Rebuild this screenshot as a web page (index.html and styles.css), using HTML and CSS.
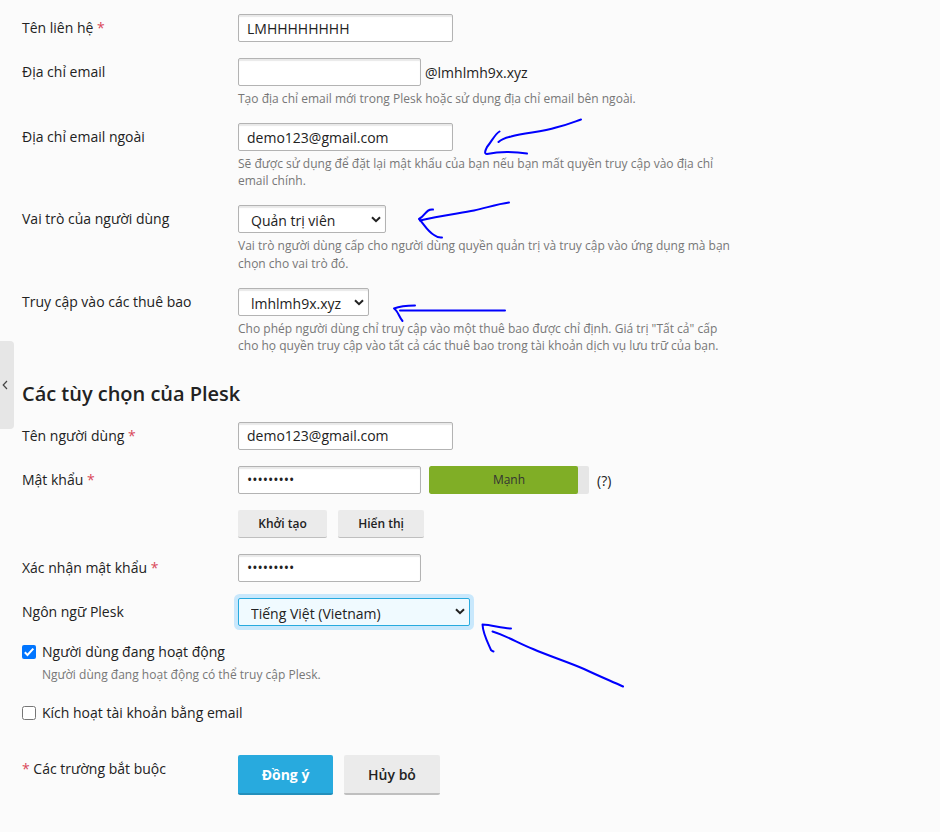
FILE: index.html
```html
<!DOCTYPE html>
<html lang="vi">
<head>
<meta charset="utf-8">
<title>Plesk</title>
<link rel="stylesheet" href="styles.css">
</head>
<body>
<button class="collapse" type="button" aria-label="Thu gọn"><svg width="6" height="10" viewBox="0 0 6 10"><path d="M5 1 1.2 5 5 9"/></svg></button>
<form class="form">
  <div class="row">
    <label class="label">Tên liên hệ <span class="req">*</span></label>
    <div class="field"><input class="input" type="text" value="LMHHHHHHHH"></div>
  </div>
  <div class="row">
    <label class="label">Địa chỉ email</label>
    <div class="field">
      <div class="line"><input class="input input-short" type="text"><span class="domain">@lmhlmh9x.xyz</span></div>
      <p class="hint">Tạo địa chỉ email mới trong Plesk hoặc sử dụng địa chỉ email bên ngoài.</p>
    </div>
  </div>
  <div class="row">
    <label class="label">Địa chỉ email ngoài</label>
    <div class="field">
      <input class="input" type="text" value="demo123@gmail.com">
      <p class="hint">Sẽ được sử dụng để đặt lại mật khẩu của bạn nếu bạn mất quyền truy cập vào địa chỉ<br>email chính.</p>
    </div>
  </div>
  <div class="row row-role">
    <label class="label">Vai trò của người dùng</label>
    <div class="field">
      <div class="select select-role"><select><option>Quản trị viên</option></select><svg class="chevron" width="10" height="7" viewBox="0 0 10 7"><path d="M1 1.2 5 5.2 9 1.2"/></svg></div>
      <p class="hint">Vai trò người dùng cấp cho người dùng quyền quản trị và truy cập vào ứng dụng mà bạn<br>chọn cho vai trò đó.</p>
    </div>
  </div>
  <div class="row">
    <label class="label">Truy cập vào các thuê bao</label>
    <div class="field">
      <div class="select select-sub"><select><option>lmhlmh9x.xyz</option></select><svg class="chevron" width="10" height="7" viewBox="0 0 10 7"><path d="M1 1.2 5 5.2 9 1.2"/></svg></div>
      <p class="hint">Cho phép người dùng chỉ truy cập vào một thuê bao được chỉ định. Giá trị "Tất cả" cấp<br>cho họ quyền truy cập vào tất cả các thuê bao trong tài khoản dịch vụ lưu trữ của bạn.</p>
    </div>
  </div>
  <h2 class="title">Các tùy chọn của Plesk</h2>
  <div class="row">
    <label class="label">Tên người dùng <span class="req">*</span></label>
    <div class="field"><input class="input" type="text" value="demo123@gmail.com"></div>
  </div>
  <div class="row">
    <label class="label">Mật khẩu <span class="req">*</span></label>
    <div class="field">
      <div class="line">
        <input class="input input-short" type="password" value="demo12345">
        <div class="meter"><div class="meter-fill">Mạnh</div></div>
        <span class="help">(?)</span>
      </div>
      <div class="line tools">
        <button class="btn btn-generate" type="button">Khởi tạo</button>
        <button class="btn btn-show" type="button">Hiển thị</button>
      </div>
    </div>
  </div>
  <div class="row">
    <label class="label">Xác nhận mật khẩu <span class="req">*</span></label>
    <div class="field"><input class="input input-short" type="password" value="demo12345"></div>
  </div>
  <div class="row">
    <label class="label">Ngôn ngữ Plesk</label>
    <div class="field">
      <div class="select select-lang focused"><select><option>Tiếng Việt (Vietnam)</option></select><svg class="chevron" width="10" height="7" viewBox="0 0 10 7"><path d="M1 1.2 5 5.2 9 1.2"/></svg></div>
    </div>
  </div>
  <div class="check">
    <svg class="box" width="14" height="14" viewBox="0 0 14 14"><rect width="14" height="14" rx="2" fill="#0075ff"/><path d="M2.8 7.3 5.5 10 11.3 3.6" fill="none" stroke="#fff" stroke-width="2"/></svg>
    <div><label>Người dùng đang hoạt động</label><p class="hint">Người dùng đang hoạt động có thể truy cập Plesk.</p></div>
  </div>
  <div class="check">
    <svg class="box" width="14" height="14" viewBox="0 0 14 14"><rect x=".5" y=".5" width="13" height="13" rx="2" fill="#fff" stroke="#767676"/></svg>
    <label>Kích hoạt tài khoản bằng email</label>
  </div>
  <div class="footer">
    <div class="note"><span class="req">*</span> Các trường bắt buộc</div>
    <button class="btn btn-large btn-primary" type="button">Đồng ý</button>
    <button class="btn btn-large btn-cancel" type="button">Hủy bỏ</button>
  </div>
</form>
<svg class="ink" width="940" height="832" viewBox="0 0 940 832">
  <path d="M581 119.500C576 121 570 124 556 127.500C542 132 526 132.500 511 136.500Q502 138.500 498.500 142"/>
  <path d="M499.500 131.500C495 134 492 141 487 147C485 151 484 154 487 154C494 152.500 499 152 507 152Q518 152 527 153.500"/>
  <path d="M509 202.500C497 204 486 208 474 210.500C458 213.500 438 216 420 220.500"/>
  <path d="M433 209.500C426 208.500 425 216 419 219C424 224 427 231 434 235Q438 238 442 237.500"/>
  <path d="M505 310.500H400"/>
  <path d="M415 305.500C405 305.500 399 306.500 394 308.500C398 311 399 317 402.500 321"/>
  <path d="M623 686.500C611 681 601 677 584 669C568 662 549 656 533 649C518 643 507 636 492.500 631.500"/>
  <path d="M511 628.500C501 628 492 625 482.500 624.500C483 634 488 643 491 650Q492 651 493.500 651.500"/>
</svg>
</body>
</html>
```
FILE: styles.css
```css
* { box-sizing: border-box; }
body {
  margin: 0;
  width: 940px;
  height: 832px;
  overflow: hidden;
  position: relative;
  background: #fbfbfb;
  color: #222;
  font: 14px/20px "Open Sans", "Noto Sans", sans-serif;
}
.form { padding: 14px 0 0 22px; }
.row { display: grid; grid-template-columns: 216px 1fr; margin-bottom: 16px; }
.row-role { margin-top: -0.1px; }
.row-role .hint { margin-top: 3.6px; }
.label { padding-top: 4px; }
.req { color: #d9485a; }
.field { display: flex; flex-direction: column; align-items: flex-start; }
.line { display: flex; }
.input {
  width: 215px;
  height: 28px;
  padding: 0 8px;
  border: 1px solid #b3b3b3;
  border-radius: 2px;
  background: #fff;
  box-shadow: inset 0 2px 1px #e9e9e9;
  color: #222;
  font: inherit;
  outline: 0;
}
.input-short { width: 183px; }
.domain { margin: 5px 0 0 4px; }
.hint { margin: 3.5px 0 0; color: #777; font-size: 12px; line-height: 17.5px; letter-spacing: 0.01px; white-space: nowrap; }
.select {
  display: flex;
  align-items: center;
  height: 28px;
  padding-right: 4px;
  border: 1px solid #b3b3b3;
  border-radius: 2px;
  background: #fff;
  box-shadow: inset 0 2px 1px #e9e9e9;
}
.select select {
  flex: 1;
  min-width: 0;
  height: 26px;
  padding: 4px 0 0 12px;
  border: 0;
  background: none;
  appearance: none;
  color: #222;
  font: inherit;
  outline: 0;
}
.select-role { width: 148px; }
.select-sub { width: 131px; }
.select-lang { width: 232px; }
.focused { border-color: #28aade; background: #f0faff; box-shadow: 0 0 0 4px #c9e8fc; }
.chevron path { fill: none; stroke: #222; stroke-width: 2; }
.title { margin: 27px 0 16px; font-size: 20px; font-weight: 600; line-height: 24px; letter-spacing: -0.02px; }
.meter { width: 160px; height: 28px; margin-left: 8px; border-radius: 2px; background: #e6e6e6; overflow: hidden; }
.meter-fill { width: 149px; height: 28px; padding-left: 11px; border-radius: 2px; background: #80ae26; color: #333; font-size: 12px; line-height: 27px; text-align: center; }
.help { margin: 5px 0 0 8px; }
.tools { gap: 11px; margin-top: 16px; }
.btn {
  height: 28px;
  padding: 0;
  border: 0;
  border-bottom: 1px solid #bfbfbf;
  border-radius: 2px;
  background: #ebebeb;
  color: #222;
  font: 600 12px/27px "Open Sans", "Noto Sans", sans-serif;
}
.btn-generate { width: 89px; }
.btn-show { width: 86px; }
.check { display: flex; gap: 6px; margin-bottom: 20px; }
.check .box { margin-top: 3px; }
.check .hint { margin: 4px 0 -0.5px; }
.footer { display: flex; margin-top: 32px; }
.note { width: 216px; padding-top: 4px; }
.btn-large { height: 40px; padding-top: 2px; border-bottom-width: 2px; font-size: 14px; line-height: 36px; }
.btn-primary { width: 95px; border-color: #238fbb; background: #28aade; color: #fff; font-weight: 700; }
.btn-cancel { width: 96px; margin-left: 11px; }
.collapse {
  position: absolute;
  left: 0;
  top: 341px;
  width: 14px;
  height: 88px;
  padding: 0 0 0 2px;
  border: 0;
  border-radius: 0 4px 4px 0;
  background: #e6e6e6;
  display: flex;
  align-items: center;
}
.collapse path { fill: none; stroke: #444; stroke-width: 1.2; }
.ink { position: absolute; left: 0; top: 0; pointer-events: none; }
.ink path { fill: none; stroke: #0000fe; stroke-width: 2; stroke-linecap: round; stroke-linejoin: round; }
```
